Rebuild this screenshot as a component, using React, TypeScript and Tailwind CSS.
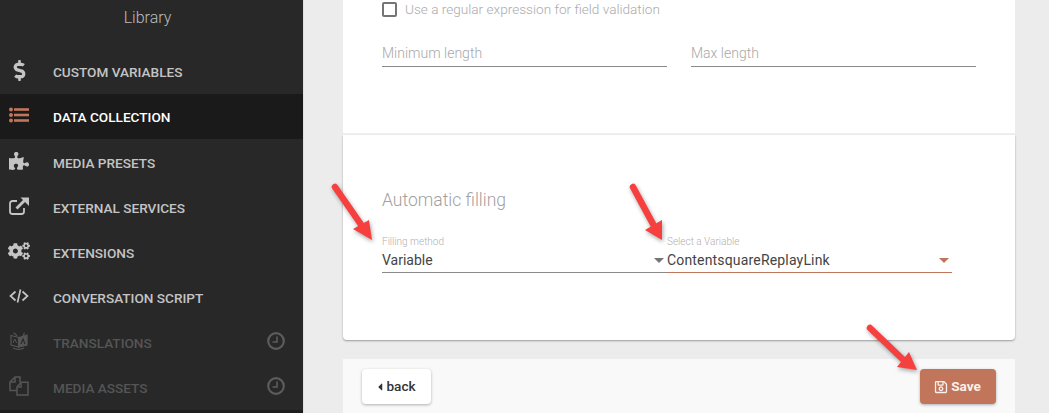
import type { ComponentType, ReactNode } from 'react';
import { FaCaretLeft, FaCogs, FaDollarSign, FaPuzzlePiece, FaRegSave } from 'react-icons/fa';

type IconProps = { className?: string };

const ListIcon = ({ className }: IconProps) => (
  <svg className={className} width="20" height="16" viewBox="0 0 20 16" fill="currentColor">
    <circle cx="2" cy="2.5" r="2" />
    <circle cx="2" cy="8" r="2" />
    <circle cx="2" cy="13.5" r="2" />
    <rect x="5" y="1.2" width="15" height="2.6" />
    <rect x="5" y="6.7" width="15" height="2.6" />
    <rect x="5" y="12.2" width="15" height="2.6" />
  </svg>
);

const ExternalIcon = ({ className }: IconProps) => (
  <svg className={className} width="20" height="18" viewBox="0 0 20 18" fill="none" stroke="currentColor">
    <path d="M15 11v3.5a2.5 2.5 0 0 1-2.500 2.500H3.500A2.500 2.500 0 0 1 1 14.500V6.500A2.500 2.500 0 0 1 3.500 4H8" strokeWidth="1.800" />
    <path d="M7.500 11.500L16 3" strokeWidth="2.800" />
    <path d="M11.500 0.500H20V9z" fill="currentColor" stroke="none" />
  </svg>
);

const CodeIcon = ({ className }: IconProps) => (
  <svg className={className} width="20" height="14" viewBox="0 0 20 14" fill="none" stroke="currentColor" strokeWidth="1.700">
    <path d="M6.500 2.500L1.500 7l5 4.500" />
    <path d="M13.500 2.500l5 4.500-5 4.500" />
    <path d="M11.500 0.500L8.500 13.500" />
  </svg>
);

const TranslateIcon = ({ className }: IconProps) => (
  <svg className={className} width="18" height="18" viewBox="0 0 18 18" fill="none" stroke="currentColor" strokeWidth="1.200">
    <path d="M1 3.500L8.500 5.500V15L1 13z" />
    <path d="M9 5.500L17 3V13L9 15z" fill="currentColor" />
    <path d="M3 16c3 1.800 8 1.800 11 0" />
    <path d="M3.500 0.800C5 1.500 6 2.500 7 4" />
    <path d="M14.500 0.800L13 4" />
    <path d="M3 11l1.800-4 1.800 4" strokeWidth="1" />
    <path d="M11 12l2-5 2 5" stroke="#282828" strokeWidth="1.100" />
  </svg>
);

const CopyIcon = ({ className }: IconProps) => (
  <svg className={className} width="20" height="20" viewBox="0 0 20 20" fill="none" stroke="currentColor" strokeWidth="1.500">
    <path d="M8 14.500H1V6l5-5h5v5" />
    <path d="M1 6h5V1" />
    <path d="M8 11l4-4.800h7V19H8z" />
    <path d="M8 11h4V6.200" />
  </svg>
);

const ClockIcon = ({ className }: IconProps) => (
  <svg className={className} width="18" height="18" viewBox="0 0 18 18" fill="none" stroke="currentColor">
    <circle cx="9" cy="9" r="7.800" strokeWidth="2.200" />
    <path d="M10 4.500V10H5.500" strokeWidth="1.600" />
  </svg>
);

type NavItemProps = {
  icon: ComponentType<IconProps>;
  label: string;
  active?: boolean;
  disabled?: boolean;
  iconClass?: string;
};

const NavItem = ({ icon: Icon, label, active, disabled, iconClass }: NavItemProps) => {
  const rowColor = active ? 'bg-[#1a1a1a] text-white' : disabled ? 'text-[#555555]' : 'text-[#c4c4c4]';
  return (
    <div className={`flex h-[45px] items-center text-[13.6px] font-medium uppercase ${rowColor}`}>
      <div className="mb-[3px] flex w-[53px] justify-center pr-[15px]">
        <Icon className={iconClass ?? 'text-[20px]'} />
      </div>
      <span className="flex-1 pt-px">{label}</span>
      {disabled && <ClockIcon className="mr-[18px] mb-[3px] text-[#5c5c5c]" />}
    </div>
  );
};

const Caret = ({ className }: { className: string }) => (
  <span className={`h-0 w-0 border-x-[5px] border-t-[5px] border-x-transparent ${className}`} />
);

const TextField = ({ label }: { label: string }) => (
  <div className="h-[33px] w-[285px] border-b-[1.5px] border-[#8a8a8a] pt-[9px] text-sm font-light text-[#a8a8a8]">
    {label}
  </div>
);

const SelectField = ({ label, value, focused }: { label: string; value: string; focused?: boolean }) => (
  <div className="w-[285px]">
    <div className="h-[14px] pt-px text-[10px] leading-[13px] font-light text-[#b0b0b0]">{label}</div>
    <div
      className={`flex h-[25px] items-center justify-between pr-[3px] text-sm text-[#444444] border-b-[1.5px] ${
        focused ? 'border-[#c1755a] tracking-[0.17px]' : 'border-[#8a8a8a]'
      }`}
    >
      <span>{value}</span>
      <Caret className={focused ? 'border-t-[#c1755a]' : 'border-t-[#757575]'} />
    </div>
  </div>
);

const ActionButton = ({ children, className }: { children: ReactNode; className: string }) => (
  <button
    className={`flex h-[35px] items-center justify-center rounded text-[13.6px] shadow-[0_1px_3px_rgba(0,0,0,0.3)] ${className}`}
  >
    {children}
  </button>
);

const Arrow = ({ tail, tip, a, b }: { tail: number[]; tip: number[]; a: number[]; b: number[] }) => (
  <g>
    <line
      x1={tail[0]}
      y1={tail[1]}
      x2={(a[0] + b[0]) / 2}
      y2={(a[1] + b[1]) / 2}
      stroke="#f6403f"
      strokeWidth="6.500"
      strokeLinecap="round"
    />
    <polygon points={`${a.join(',')} ${tip.join(',')} ${b.join(',')}`} fill="#f6403f" />
  </g>
);

export default function App() {
  return (
    <div className="relative flex h-[413px] w-[1049px] overflow-hidden bg-[#ececec] font-['Roboto',sans-serif]">
      <aside className="flex w-[304px] shrink-0 flex-col border-r border-[#e0e0e0] bg-[#282828]">
        <div className="h-[49px] pt-[7px] pr-[8px] text-center text-base leading-[21px] font-light text-[#bdbdbd]">
          Library
        </div>
        <NavItem icon={FaDollarSign} label="Custom Variables" iconClass="text-[21px]" />
        <NavItem icon={ListIcon} label="Data Collection" active iconClass="text-[#c1755a]" />
        <div className="h-px" />
        <NavItem icon={FaPuzzlePiece} label="Media Presets" />
        <NavItem icon={ExternalIcon} label="External Services" />
        <NavItem icon={FaCogs} label="Extensions" iconClass="text-[22px]" />
        <NavItem icon={CodeIcon} label="Conversation Script" />
        <NavItem icon={TranslateIcon} label="Translations" disabled />
        <NavItem icon={CopyIcon} label="Media Assets" disabled />
        <div className="flex-1 bg-[#1e1e1e]" />
      </aside>

      <main className="flex w-[711px] shrink-0 flex-col pl-[39px]">
        <section className="h-[133px] bg-white px-[39px]">
          <label className="flex h-[19px] items-center gap-2 text-[13.6px] font-light text-[#ababab]">
            <span className="h-[15px] w-[15px] rounded-[2px] border-2 border-[#757575]" />
            Use a regular expression for field validation
          </label>
          <div className="mt-[15px] flex gap-6">
            <TextField label="Minimum length" />
            <TextField label="Max length" />
          </div>
        </section>
        <div className="h-[2px] bg-[#efefef]" />
        <section className="h-[205px] rounded-b bg-white px-[39px] pt-[54px] shadow-[0_1px_2px_rgba(0,0,0,0.35)]">
          <h2 className="text-[17.5px] leading-[22px] font-light text-[#a0a0a0]">Automatic filling</h2>
          <div className="mt-[23px] flex">
            <SelectField label="Filling method" value="Variable" />
            <SelectField label="Select a Variable" value="ContentsquareReplayLink" focused />
          </div>
        </section>
        <footer className="mt-[19px] flex flex-1 items-start justify-between bg-[#f9f9f9] pt-[10px] pr-[19px] pl-[19px]">
          <ActionButton className="w-[69px] bg-white pr-[3px] font-medium text-[#333333]">
            <FaCaretLeft className="text-[12px]" />
            back
          </ActionButton>
          <ActionButton className="w-[76px] gap-[3px] bg-[#c1755a] pr-[1px] font-bold text-[#f9f0ec]">
            <FaRegSave className="text-[14px]" />
            Save
          </ActionButton>
        </footer>
      </main>

      <svg className="absolute top-0 left-0 drop-shadow-[1px_2px_2px_rgba(0,0,0,0.35)]" width="1049" height="413">
        <Arrow tail={[335, 187]} tip={[372, 240]} a={[353, 229]} b={[369, 220]} />
        <Arrow tail={[633, 187]} tip={[662, 240]} a={[645, 230]} b={[662, 220]} />
        <Arrow tail={[870, 328]} tip={[917, 370]} a={[897, 367]} b={[909, 352]} />
      </svg>
    </div>
  );
}
